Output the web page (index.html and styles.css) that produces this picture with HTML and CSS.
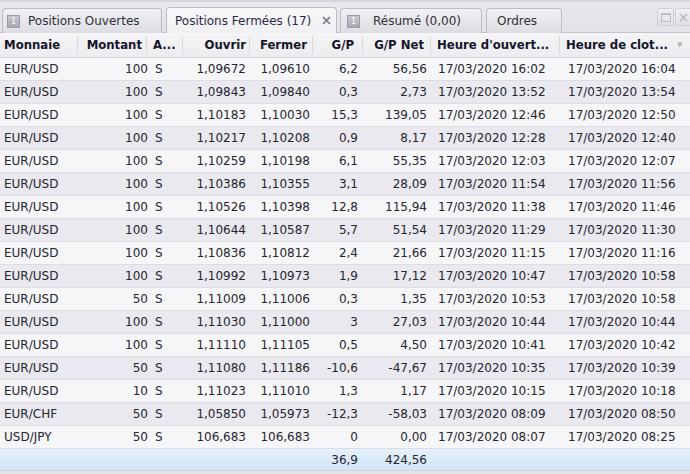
FILE: index.html
```html
<!DOCTYPE html>
<html lang="fr">
<head>
<meta charset="utf-8">
<title>Positions Fermées</title>
<link rel="stylesheet" href="styles.css">
</head>
<body>
<div class="panel">
  <div class="tabbar">
    <div class="tab tab1"><span class="num">1</span><span>Positions Ouvertes</span></div>
    <div class="tab active tab2"><span>Positions Fermées (17)</span>
      <svg class="x" width="9" height="9" viewBox="0 0 9 9"><path d="M1 1L8 8M8 1L1 8" stroke="#7a7a86" stroke-width="1.7"/></svg>
    </div>
    <div class="tab tab3"><span class="num">1</span><span>Résumé (0,00)</span></div>
    <div class="tab tab4"><span>Ordres</span></div>
    <div class="winbtns">
      <div class="wbtn"><span class="maxi"></span></div>
      <div class="wbtn close"><svg width="9" height="9" viewBox="0 0 9 9"><path d="M1 1L8 8M8 1L1 8" stroke="#b9b9c2" stroke-width="1.5"/></svg></div>
    </div>
  </div>
  <div class="head">
    <div class="hc l">Monnaie</div>
    <div class="hc r p5">Montant</div>
    <div class="hc l p6">A...</div>
    <div class="hc r p4">Ouvrir</div>
    <div class="hc r p6">Fermer</div>
    <div class="hc r p9">G/P</div>
    <div class="hc r p7">G/P Net</div>
    <div class="hc l p6">Heure d'ouvert...</div>
    <div class="hc l p6 last">Heure de clot...<span class="arrow">▼</span></div>
  </div>
  <div class="rows" id="rows"></div>
  <div class="row total">
    <div></div><div></div><div></div><div></div><div></div>
    <div class="r">36,9</div><div class="r">424,56</div><div></div><div></div>
  </div>
  <div class="foot"></div>
</div>
<script src="app.js"></script>
</body>
</html>
```
FILE: app.js
```js
const data = [
["EUR/USD","100","1,09672","1,09610","6,2","56,56","16:02","16:04"],
["EUR/USD","100","1,09843","1,09840","0,3","2,73","13:52","13:54"],
["EUR/USD","100","1,10183","1,10030","15,3","139,05","12:46","12:50"],
["EUR/USD","100","1,10217","1,10208","0,9","8,17","12:28","12:40"],
["EUR/USD","100","1,10259","1,10198","6,1","55,35","12:03","12:07"],
["EUR/USD","100","1,10386","1,10355","3,1","28,09","11:54","11:56"],
["EUR/USD","100","1,10526","1,10398","12,8","115,94","11:38","11:46"],
["EUR/USD","100","1,10644","1,10587","5,7","51,54","11:29","11:30"],
["EUR/USD","100","1,10836","1,10812","2,4","21,66","11:15","11:16"],
["EUR/USD","100","1,10992","1,10973","1,9","17,12","10:47","10:58"],
["EUR/USD","50","1,11009","1,11006","0,3","1,35","10:53","10:58"],
["EUR/USD","100","1,11030","1,11000","3","27,03","10:44","10:44"],
["EUR/USD","100","1,11110","1,11105","0,5","4,50","10:41","10:42"],
["EUR/USD","50","1,11080","1,11186","-10,6","-47,67","10:35","10:39"],
["EUR/USD","10","1,11023","1,11010","1,3","1,17","10:15","10:18"],
["EUR/CHF","50","1,05850","1,05973","-12,3","-58,03","08:09","08:50"],
["USD/JPY","50","106,683","106,683","0","0,00","08:07","08:25"]
];
const rows = document.getElementById("rows");
data.forEach((d, i) => {
  const r = document.createElement("div");
  r.className = "row " + (i % 2 ? "even" : "odd");
  const cells = [
    ["l pl4", d[0]], ["r", d[1]], ["l pl3", "S"], ["r", d[2]], ["r", d[3]],
    ["r", d[4]], ["r", d[5]], ["l pl7", "17/03/2020 " + d[6]], ["l pl8", "17/03/2020 " + d[7]]
  ];
  cells.forEach(([c, t]) => {
    const e = document.createElement("div");
    e.className = c;
    e.textContent = t;
    r.appendChild(e);
  });
  rows.appendChild(r);
});
```
FILE: styles.css
```css
html, body {
  margin: 0;
  padding: 0;
}
body {
  width: 690px;
  height: 474px;
  overflow: hidden;
  background: #e6e6ea;
  font-family: "DejaVu Sans", Verdana, sans-serif;
  font-size: 12px;
  color: #26262e;
}
.panel {
  width: 690px;
}
.tabbar {
  height: 33px;
  box-sizing: border-box;
  border-top: 2px solid #d6d6dc;
  background: linear-gradient(#e9e9ed, #e1e1e6);
  display: flex;
  align-items: flex-end;
  padding-left: 2px;
  position: relative;
  border-bottom: 1px solid #c4c4cc;
}
.tab {
  height: 25px;
  box-sizing: border-box;
  border: 1px solid #bdbdc6;
  border-bottom: none;
  border-radius: 4px 4px 0 0;
  background: linear-gradient(#f1f1f4, #dcdce2);
  display: flex;
  align-items: center;
  color: #30303a;
  margin-right: 4px;
  margin-bottom: -1px;
}
.tab1 { width: 160px; padding-left: 4px; }
.tab2 { width: 171px; padding-left: 8px; }
.tab3 { width: 142px; padding-left: 6px; margin-left: -1px; }
.tab4 { width: 76px; padding-left: 10px; }
.tab.active {
  background: linear-gradient(#f8f8fa, #f0f0f3);
  height: 26px;
  color: #2a2a44;
}
.num {
  width: 13px;
  height: 13px;
  box-sizing: border-box;
  border: 1px solid #9c9ca6;
  background: linear-gradient(#c8c8d0, #a8a8b2);
  color: #fff;
  font-size: 8px;
  line-height: 11px;
  text-align: center;
  margin-right: 8px;
}
.tab3 .num { margin-right: 13px; }
.x {
  margin-left: 11px;
}
.winbtns {
  position: absolute;
  right: -2px;
  top: 6px;
  display: flex;
  gap: 1px;
}
.wbtn {
  width: 17px;
  height: 18px;
  box-sizing: border-box;
  border: 1px solid #cfcfd6;
  border-radius: 2px;
  background: linear-gradient(#f2f2f5, #dedee4);
  display: flex;
  align-items: center;
  justify-content: center;
}
.maxi {
  width: 8px;
  height: 6px;
  border: 1px solid #bcbcc5;
  border-top-width: 2px;
}
.head {
  display: grid;
  grid-template-columns: 78px 69px 36px 67px 63px 50px 68px 129px 130px;
  height: 24px;
  background: linear-gradient(#f5f5f7, #ececf0);
  border-bottom: 1px solid #d3d3da;
  font-weight: bold;
  font-size: 11.7px;
  color: #15152a;
}
.hc {
  display: flex;
  align-items: center;
  border-right: 1px solid #d8d8de;
  margin: 3px 0;
  white-space: nowrap;
  overflow: hidden;
}
.hc.last { border-right: none; position: relative; }
.hc.l { padding-left: 4px; }
.hc.r { justify-content: flex-end; }
.hc.p4 { padding-right: 3px; }
.hc.p5 { padding-right: 4px; }
.hc.p6 { padding-right: 5px; }
.hc.l.p6 { padding-left: 6px; padding-right: 0; }
.hc.p7 { padding-right: 6px; }
.hc.p9 { padding-right: 8px; }
.arrow {
  font-size: 7px;
  color: #b4b4bc;
  margin-left: 9px;
  font-weight: normal;
}
.row {
  display: grid;
  grid-template-columns: 78px 74px 31px 67px 64px 48px 69px 129px 130px;
  height: 23px;
  box-sizing: border-box;
  border-bottom: 1px solid #dcdce2;
  align-items: center;
  white-space: nowrap;
}
.row.odd { background: #f6f6f9; }
.row.even { background: #e9e9ef; }
.row .r { text-align: right; padding-right: 4px; }
.row .pl3 { padding-left: 3px; }
.row .pl4 { padding-left: 4px; }
.row .pl7 { padding-left: 7px; }
.row .pl8 { padding-left: 8px; }
.row.total {
  background: linear-gradient(#e6f2fc, #cfe4f7);
  height: 22px;
  border-bottom: 1px solid #c6d6e6;
}
.foot {
  height: 3px;
  background: #e4e4e8;
}
```
